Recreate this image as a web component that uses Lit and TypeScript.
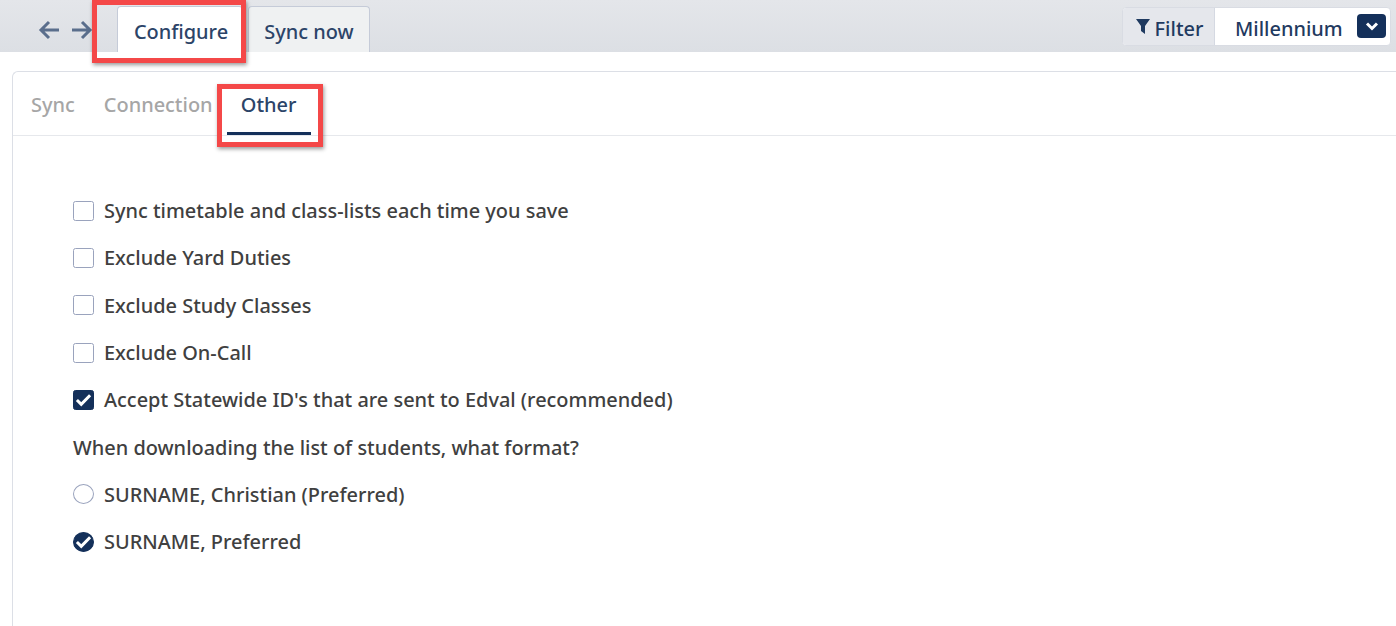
import { LitElement, html, css } from "lit";
import { customElement } from "lit/decorators.js";

const check = html`<svg viewBox="0 0 18 17" class="tick"><path d="M2 8.5l4.6 4.6L16 3.5" fill="none" stroke="#fff" stroke-width="3.2"/></svg>`;

@customElement("app-root")
export class AppRoot extends LitElement {
  static styles = css`
    :host { display: block; width: 1396px; height: 626px; overflow: hidden; background: #fff; position: relative;
      font-family: "Noto Sans", "Open Sans", sans-serif; font-weight: 500; font-size: 19.95px; color: #404040; }
    .top { height: 52px; background: linear-gradient(#e4e6ea, #dcdfe4); display: flex; align-items: flex-end; box-sizing: border-box; padding: 0 5px 0 38px; }
    .arrows { display: flex; gap: 11px; align-self: flex-start; margin-top: 19px; margin-right: 24px; }
    .arrows svg { width: 22px; height: 22px; display: block; }
    .tab { height: 46px; box-sizing: border-box; border: 1px solid #c5cbd8; border-bottom: none; border-radius: 4px 4px 0 0; display: flex; align-items: center; justify-content: center; color: #2c4468; padding-top: 4px; }
    .tab.on { width: 126px; background: #fff; margin-right: 5px; padding-left: 2px; }
    .tab.off { width: 122px; background: #eff1f2; }
    .spacer { flex: 1; }
    .filter { align-self: flex-start; margin-top: 7px; height: 39px; display: flex; border: 1px solid #d9dce3; border-radius: 4px; box-sizing: border-box; width: 269px; overflow: hidden; background: #fff; color: #1f3a60; }
    .flabel { width: 92px; background: #e5e7ec; border-right: 1px solid #d5d9e2; display: flex; align-items: center; justify-content: center; gap: 5px; box-sizing: border-box; padding-top: 3px; padding-left: 2px; }
    .flabel svg { width: 14px; height: 16px; margin-top: -5px; }
    .fvalue { flex: 1; display: flex; align-items: center; padding-left: 20px; justify-content: space-between; padding-right: 4px; padding-top: 3px; }
    .drop { width: 29px; height: 24px; border-radius: 4px; background: #14305a; display: flex; align-items: center; justify-content: center; margin-top: -5px; }
    .drop svg { width: 14px; height: 14px; }
    .panel { margin: 19px 0 0 12px; border: 1px solid #dcdfe6; border-right: none; border-bottom: none; border-radius: 6px 0 0 0; height: 600px; box-sizing: border-box; }
    .subtabs { height: 64px; border-bottom: 1px solid #e6e8ec; display: flex; padding-left: 18px; box-sizing: border-box; }
    .sub { color: #a6a6a6; padding: 18px 0 0; box-sizing: border-box; height: 63px; line-height: 30px; }
    .sub.s1 { margin-right: 29px; }
    .sub.s2 { margin-right: 14px; }
    .sub.on { color: #2c4468; border-bottom: 3px solid #14305a; width: 84px; text-align: center; }
    .form { padding: 51px 0 0 60px; display: flex; flex-direction: column; }
    .row { height: 47.3px; display: flex; align-items: center; gap: 10px; white-space: nowrap; }
    .box { width: 21px; height: 20px; box-sizing: border-box; border: 1.5px solid #9aa3bd; border-radius: 2.5px; background: #fff; flex: none; display: flex; align-items: center; justify-content: center; }
    .box.on { background: #14305a; border-color: #14305a; }
    .radio { border-radius: 50%; }
    .tick { display: block; width: 17px; height: 16px; flex: none; }
    .mark { position: absolute; border: 5px solid #f44848; box-shadow: 1px 2px 4px rgba(0,0,0,.4); box-sizing: border-box; pointer-events: none; }
    .m1 { left: 92px; top: 0; width: 154px; height: 63px; }
    .m2 { left: 217px; top: 84px; width: 106px; height: 63px; }
  `;

  private row(kind: string, label: string) {
    const on = kind.endsWith("on");
    const radio = kind.startsWith("radio");
    return html`<div class="row"><span class="box ${on ? "on" : ""} ${radio ? "radio" : ""}">${on ? check : ""}</span>${label}</div>`;
  }

  render() {
    return html`
      <div class="top">
        <div class="arrows">
          <svg viewBox="0 0 22 22" fill="none" stroke="#5a6e8c" stroke-width="3"><path d="M21 11H3M11 3l-8 8 8 8"/></svg>
          <svg viewBox="0 0 22 22" fill="none" stroke="#5a6e8c" stroke-width="3"><path d="M1 11h18M11 3l8 8-8 8"/></svg>
        </div>
        <div class="tab on">Configure</div>
        <div class="tab off">Sync now</div>
        <div class="spacer"></div>
        <div class="filter">
          <div class="flabel"><svg viewBox="0 0 14 16"><path d="M0 1h14L9 8v8L5 13V8z" fill="#1f3a60"/></svg>Filter</div>
          <div class="fvalue">Millennium<span class="drop"><svg viewBox="0 0 14 14"><path d="M2 4.5L7 9.5l5-5" fill="none" stroke="#fff" stroke-width="3"/></svg></span></div>
        </div>
      </div>
      <div class="panel">
        <div class="subtabs">
          <div class="sub s1">Sync</div>
          <div class="sub s2">Connection</div>
          <div class="sub on">Other</div>
        </div>
        <div class="form">
          ${this.row("box", "Sync timetable and class-lists each time you save")}
          ${this.row("box", "Exclude Yard Duties")}
          ${this.row("box", "Exclude Study Classes")}
          ${this.row("box", "Exclude On-Call")}
          ${this.row("box on", "Accept Statewide ID's that are sent to Edval (recommended)")}
          <div class="row">When downloading the list of students, what format?</div>
          ${this.row("radio", "SURNAME, Christian (Preferred)")}
          ${this.row("radio on", "SURNAME, Preferred")}
        </div>
      </div>
      <div class="mark m1"></div>
      <div class="mark m2"></div>
    `;
  }
}
